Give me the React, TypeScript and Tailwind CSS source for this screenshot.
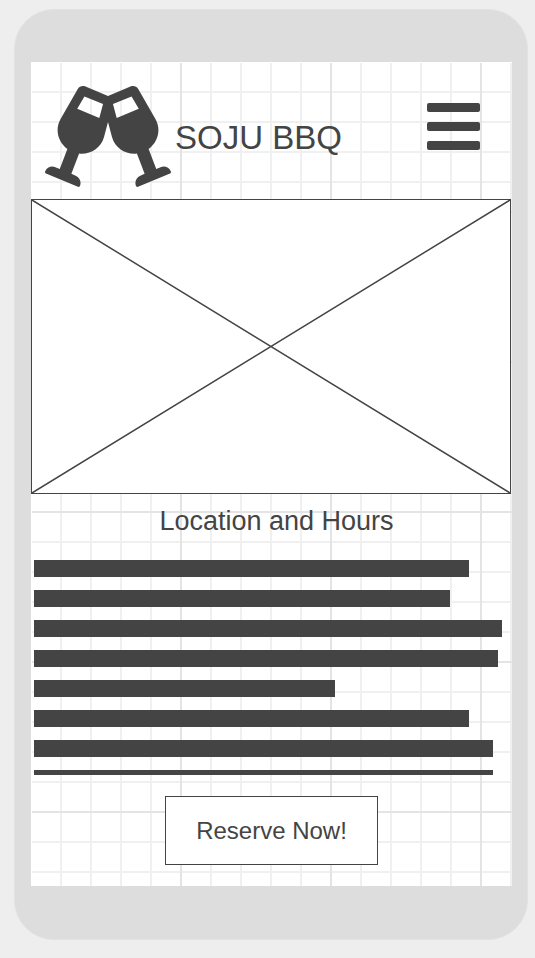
import { FaGlassCheers } from "react-icons/fa";

const lines = [
  "w-[91%] h-[17px]",
  "w-[87%] h-[17px]",
  "w-[98%] h-[17px]",
  "w-[97%] h-[17px]",
  "w-[63%] h-[17px]",
  "w-[91%] h-[17px]",
  "w-[96%] h-[17px]",
  "w-[96%] h-[5px]",
];

function Grid() {
  return (
    <svg className="absolute inset-0 h-full w-full" aria-hidden="true">
      <defs>
        <pattern id="minor" width="30" height="30" patternUnits="userSpaceOnUse">
          <path d="M30 0V30M0 30H30M0 0V30M0 0H30" stroke="#f0f0f0" strokeWidth="2" fill="none" />
        </pattern>
        <pattern id="major" width="150" height="150" patternUnits="userSpaceOnUse">
          <path d="M150 0V150M0 150H150M0 0V150M0 0H150" stroke="#e4e4e4" strokeWidth="2" fill="none" />
        </pattern>
      </defs>
      <rect width="100%" height="100%" fill="url(#minor)" />
      <rect width="100%" height="100%" fill="url(#major)" />
      <rect width="1" height="100%" fill="#ffffff" />
      <rect width="100%" height="1" fill="#ffffff" />
    </svg>
  );
}

export default function App() {
  return (
    <div className="min-h-screen bg-[#eeeeee] pt-[9px] pr-[7px] pb-[18px] pl-[14px] font-['Liberation_Sans',Arial,sans-serif] text-[#444444]">
      <div className="rounded-[40px] border border-[#e2e2e2] bg-[#dddddd] pt-[52px] pr-[15px] pb-[53px] pl-4">
        <main className="relative overflow-hidden bg-white pb-[21px]">
          <Grid />
          <div className="relative">
            <header className="flex h-[137px] items-start pr-8 pl-[14px]">
              <FaGlassCheers className="mt-6 h-[101px] w-[126px] shrink-0" aria-hidden="true" />
              <h1 className="mt-14 ml-1 text-[33px] leading-10 whitespace-nowrap">SOJU BBQ</h1>
              <button type="button" aria-label="Menu" className="mt-[41px] ml-auto flex w-[53px] flex-col gap-[10px]">
                <span className="h-[9px] w-full rounded-[2px] bg-[#444444]" />
                <span className="h-[9px] w-full rounded-[2px] bg-[#444444]" />
                <span className="h-[9px] w-full rounded-[2px] bg-[#444444]" />
              </button>
            </header>
            <div className="mr-px h-[295px] border border-[#444444] bg-white">
              <svg className="h-full w-full" viewBox="0 0 478 293" preserveAspectRatio="none" role="img" aria-label="Image placeholder">
                <path d="M0 0L478 293M478 0L0 293" stroke="#444444" strokeWidth="1.5" />
              </svg>
            </div>
            <h2 className="mt-[11px] pl-[10px] text-center text-[27px] leading-8">Location and Hours</h2>
            <div className="mt-[23px] flex flex-col gap-[13px] pl-[3px]">
              {lines.map((size, i) => (
                <div key={i} className={size + " bg-[#444444]"} />
              ))}
            </div>
            <div className="mt-[21px] flex justify-center">
              <button type="button" className="h-[69px] w-[213px] border border-[#444444] bg-white text-[24px] leading-7">
                Reserve Now!
              </button>
            </div>
          </div>
        </main>
      </div>
    </div>
  );
}
